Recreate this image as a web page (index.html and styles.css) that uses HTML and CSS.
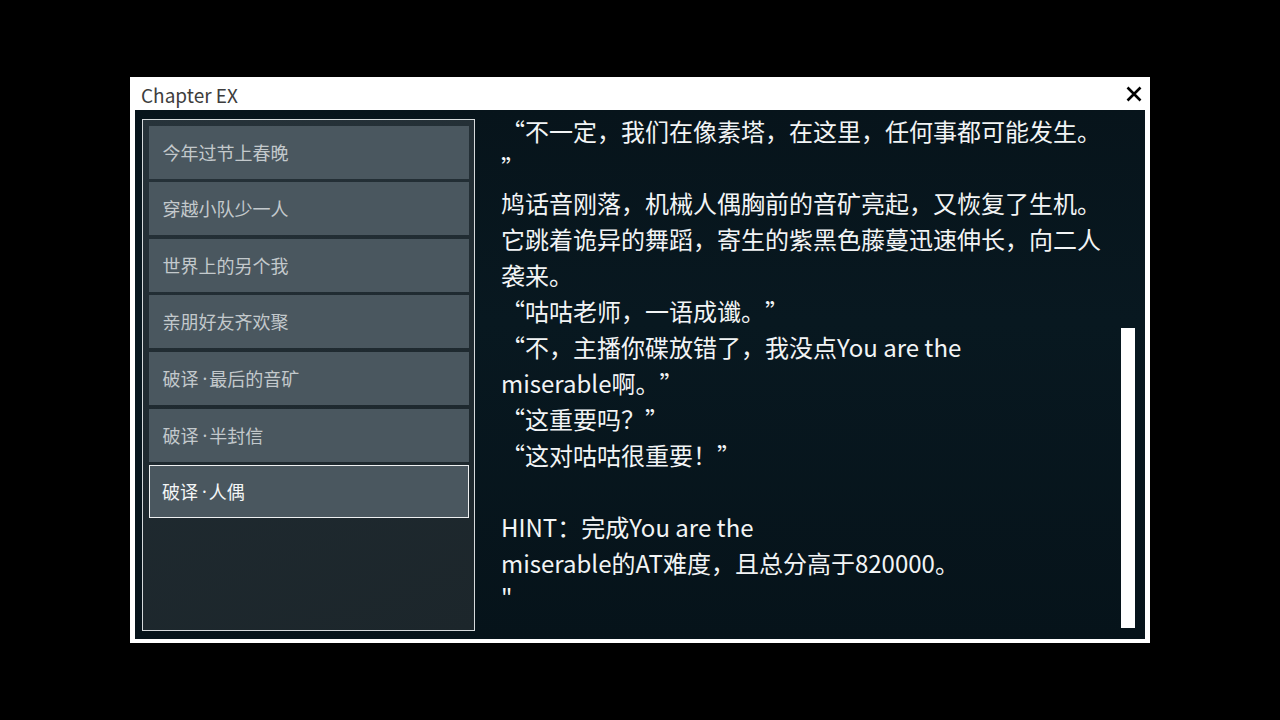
FILE: index.html
```html
<!DOCTYPE html>
<html lang="zh-CN">
<head>
<meta charset="utf-8">
<title>Chapter EX</title>
<link rel="stylesheet" href="styles.css">
</head>
<body>
<div class="window">
  <div class="titlebar">
    <span class="title">Chapter EX</span>
    <svg class="close" width="16" height="16" viewBox="0 0 16 16" aria-label="close">
      <path d="M1.5 1.5 L14.5 14.5 M14.5 1.5 L1.5 14.5" stroke="#000" stroke-width="2.6" stroke-linecap="butt" fill="none"/>
    </svg>
  </div>
  <div class="content">
    <div class="list">
      <div class="item">今年过节上春晚</div>
      <div class="item">穿越小队少一人</div>
      <div class="item">世界上的另个我</div>
      <div class="item">亲朋好友齐欢聚</div>
      <div class="item">破译<span class="dot">·</span>最后的音矿</div>
      <div class="item">破译<span class="dot">·</span>半封信</div>
      <div class="item selected">破译<span class="dot">·</span>人偶</div>
    </div>
    <div class="reader">
      <div class="text">
        <div class="line">“不一定，我们在像素塔，在这里，任何事都可能发生。</div>
        <div class="line">”</div>
        <div class="line">鸠话音刚落，机械人偶胸前的音矿亮起，又恢复了生机。</div>
        <div class="line">它跳着诡异的舞蹈，寄生的紫黑色藤蔓迅速伸长，向二人</div>
        <div class="line">袭来。</div>
        <div class="line">“咕咕老师，一语成谶。”</div>
        <div class="line">“不，主播你碟放错了，我没点You are the</div>
        <div class="line">miserable啊。”</div>
        <div class="line">“这重要吗？”</div>
        <div class="line">“这对咕咕很重要！”</div>
        <div class="line">&nbsp;</div>
        <div class="line">HINT：完成You are the</div>
        <div class="line">miserable的AT难度，且总分高于820000。</div>
        <div class="line">"</div>
      </div>
      <div class="scrollbar"></div>
    </div>
  </div>
</div>
</body>
</html>
```

FILE: styles.css
```css
html, body {
  margin: 0;
  padding: 0;
  background: #000;
}
body {
  height: 720px;
  display: flex;
  align-items: center;
  justify-content: center;
  font-family: "Noto Sans CJK SC", "Noto Sans", sans-serif;
  text-spacing-trim: space-all;
}
.window {
  width: 1020px;
  height: 566px;
  background: #fff;
  display: flex;
  flex-direction: column;
  box-sizing: border-box;
  padding: 0 5px 4px 5px;
}
.titlebar {
  height: 33px;
  display: flex;
  align-items: center;
  justify-content: space-between;
  padding: 0 3px 0 6px;
  flex: none;
}
.title {
  font-size: 19px;
  color: #3d3d3d;
  line-height: 1;
  margin-top: 1px;
}
.close {
  display: block;
}
.content {
  flex: 1;
  display: flex;
  background: linear-gradient(180deg, #07141b 0%, #081820 40%, #06131a 100%);
  padding: 9px 0 8px 7px;
  box-sizing: border-box;
  min-height: 0;
}
.list {
  width: 333px;
  flex: none;
  box-sizing: border-box;
  border: 1.5px solid #d6dadc;
  background: linear-gradient(160deg, #27333a 0%, #1f2a30 50%, #1c262b 100%);
  padding: 5.5px 5px 0 5.5px;
  display: flex;
  flex-direction: column;
  gap: 3.67px;
}
.item {
  height: 53px;
  box-sizing: border-box;
  background: #4a575f;
  color: #c3c9cc;
  font-size: 18px;
  display: flex;
  align-items: center;
  padding-left: 14px;
  padding-bottom: 1px;
  white-space: pre;
}
.item.selected {
  border: 1.5px solid #eef0f1;
  color: #f4f6f7;
  padding-left: 12.5px;
}
.dot {
  font-family: "Noto Sans", sans-serif;
  margin: 0 2px 0 4px;
}
.reader {
  flex: 1;
  position: relative;
  margin-top: -9px;
  padding: 0 0 0 26px;
  overflow: hidden;
}
.text {
  color: #f2f4f5;
  font-size: 24px;
  line-height: 36px;
  padding-top: 3px;
}
.line {
  white-space: nowrap;
}
.scrollbar {
  position: absolute;
  right: 10px;
  bottom: 3px;
  width: 14px;
  height: 300px;
  background: #fff;
}
```
